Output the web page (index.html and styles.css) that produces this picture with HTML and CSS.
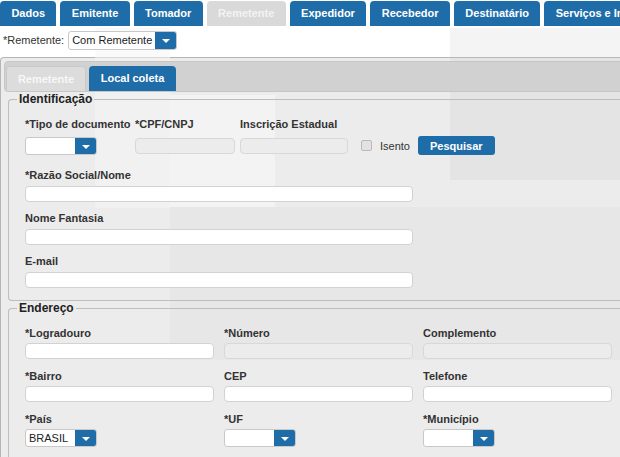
FILE: index.html
```html
<!DOCTYPE html>
<html lang="pt-BR">
<head>
    <meta charset="UTF-8">
    <meta name="viewport" content="width=device-width, initial-scale=1.0">
    <title>Remetente - Local coleta</title>
    <link rel="stylesheet" href="styles.css">
</head>
<body>

<div class="page">

    <!-- light glare bands, painted between the backgrounds and the form -->
    <div class="shade shade-a"></div>
    <div class="shade shade-b"></div>
    <div class="shade shade-c"></div>
    <div class="shade shade-d"></div>

    <ul class="main-tabs layer">
        <li class="tab">Dados</li>
        <li class="tab">Emitente</li>
        <li class="tab">Tomador</li>
        <li class="tab current">Remetente</li>
        <li class="tab">Expedidor</li>
        <li class="tab">Recebedor</li>
        <li class="tab">Destinatário</li>
        <li class="tab">Serviços e Impostos</li>
    </ul>

    <div class="sender-row layer">
        <span>*Remetente:</span>
        <div class="select select-sender">
            <span class="select-value">Com Remetente</span>
            <span class="select-btn"></span>
        </div>
    </div>

    <div class="panel">
        <div class="subtabs layer">
            <span class="subtab off">Remetente</span>
            <span class="subtab on">Local coleta</span>
        </div>

        <fieldset class="group layer">
            <legend>Identificação</legend>

            <div class="doc-grid">
                <label>*Tipo de documento</label>
                <label>*CPF/CNPJ</label>
                <label>Inscrição Estadual</label>
                <span></span>
                <span></span>

                <div class="select select-small">
                    <span class="select-value"></span>
                    <span class="select-btn"></span>
                </div>
                <input type="text" class="box box-cpf" disabled>
                <input type="text" class="box box-ie" disabled>
                <div class="check-wrap">
                    <span class="check"></span>
                    <span>Isento</span>
                </div>
                <button class="btn">Pesquisar</button>
            </div>

            <div class="field">
                <label>*Razão Social/Nome</label>
                <input type="text" class="box box-wide">
            </div>
            <div class="field">
                <label>Nome Fantasia</label>
                <input type="text" class="box box-wide">
            </div>
            <div class="field last">
                <label>E-mail</label>
                <input type="text" class="box box-wide">
            </div>
        </fieldset>

        <fieldset class="group layer">
            <legend>Endereço</legend>

            <div class="address-grid">
                <div class="field">
                    <label>*Logradouro</label>
                    <input type="text" class="box">
                </div>
                <div class="field">
                    <label>*Número</label>
                    <input type="text" class="box" disabled>
                </div>
                <div class="field">
                    <label>Complemento</label>
                    <input type="text" class="box" disabled>
                </div>

                <div class="field">
                    <label>*Bairro</label>
                    <input type="text" class="box">
                </div>
                <div class="field">
                    <label>CEP</label>
                    <input type="text" class="box">
                </div>
                <div class="field">
                    <label>Telefone</label>
                    <input type="text" class="box">
                </div>

                <div class="field">
                    <label>*País</label>
                    <div class="select select-small">
                        <span class="select-value">BRASIL</span>
                        <span class="select-btn"></span>
                    </div>
                </div>
                <div class="field">
                    <label>*UF</label>
                    <div class="select select-small">
                        <span class="select-value"></span>
                        <span class="select-btn"></span>
                    </div>
                </div>
                <div class="field">
                    <label>*Município</label>
                    <div class="select select-small">
                        <span class="select-value"></span>
                        <span class="select-btn"></span>
                    </div>
                </div>
            </div>
        </fieldset>
    </div>

</div>

</body>
</html>
```

FILE: styles.css
```css
*{
    margin: 0;
    padding: 0;
    box-sizing: border-box;
}

body{
    font-family: "Liberation Sans", Arial, sans-serif;
    font-size: 11px;
    color: #333;
    background-color: #fff;
    overflow: hidden;
}

.page{
    position: relative;
    width: 720px;
}

.layer{
    position: relative;
    z-index: 1;
}

/* top tabs */

.main-tabs{
    display: flex;
    gap: 4px;
    padding-top: 1px;
    list-style: none;
    white-space: nowrap;
}

.main-tabs .tab{
    height: 25px;
    line-height: 25px;
    padding: 0 11.4px;
    background-color: #1f6da8;
    color: #fff;
    font-weight: bold;
    border-radius: 4px 4px 0 0;
}

.main-tabs .current{
    background-color: #d9d9d9;
    color: #f3f3f3;
}

/* remetente select row */

.sender-row{
    display: flex;
    align-items: center;
    gap: 4px;
    height: 22px;
    margin-top: 3px;
    padding-left: 3px;
}

.select{
    display: flex;
    height: 18px;
    border: 1px solid #c8c8c8;
    border-radius: 3px;
    background-color: #fff;
    overflow: hidden;
}

.select-value{
    flex: 1;
    line-height: 16px;
    padding-left: 3px;
    color: #222;
}

.select-btn{
    position: relative;
    width: 21px;
    background-color: #1f6da8;
}

.select-btn::after{
    content: "";
    position: absolute;
    left: 7px;
    top: 7px;
    border-left: 4px solid transparent;
    border-right: 4px solid transparent;
    border-top: 4px solid #fff;
}

.select-sender{
    width: 109px;
    height: 19px;
}

.select-sender .select-value{
    line-height: 17px;
}

.select-small{
    width: 72px;
}

/* panel */

.panel{
    margin-top: 6px;
    padding: 3px;
    border: 1px solid #b5b5b5;
    border-right: none;
    border-radius: 4px 0 0 0;
    background-color: #ececec;
    height: 420px;
}

.subtabs{
    display: flex;
    align-items: flex-end;
    gap: 3px;
    height: 31px;
    padding-left: 1px;
    border: 1px solid #c6c6c6;
    border-radius: 4px;
    background-color: #d1d1d1;
}

.subtab{
    height: 25px;
    line-height: 25px;
    text-align: center;
    white-space: nowrap;
    font-weight: bold;
    border-radius: 4px 4px 0 0;
}

.subtab.off{
    width: 80px;
    background-color: #dcdcdc;
    border: 1px solid #c9c9c9;
    border-bottom: none;
    color: #f7f7f7;
    line-height: 24px;
}

.subtab.on{
    width: 87px;
    background-color: #1f6da8;
    color: #fff;
}

/* fieldsets */

.group{
    margin: 0 0 0 4px;
    padding: 11px 16px 12px;
    border: 1px solid #bdbdbd;
    border-right: none;
    border-radius: 4px 0 0 4px;
}

.group legend{
    margin-left: -8px;
    padding: 0 2px;
    line-height: 14px;
    font-size: 12px;
    font-weight: bold;
    color: #222;
}

label{
    display: block;
    line-height: 14px;
    font-weight: bold;
    color: #333;
}

.box{
    display: block;
    width: 100%;
    height: 16px;
    border: 1px solid #d2d2d2;
    border-radius: 4px;
    background-color: #fff;
    outline: none;
}

.box:disabled{
    background-color: #ececec;
    border-color: #d8d8d8;
}

.doc-grid{
    display: grid;
    grid-template-columns: 110px 105px 108px max-content max-content;
    justify-content: start;
    align-items: center;
    row-gap: 5px;
    margin-bottom: 13px;
}

.box-cpf{
    width: 100px;
}

.box-ie{
    width: 108px;
}

.check-wrap{
    display: flex;
    align-items: center;
    gap: 8px;
    margin-left: 13px;
}

.check{
    width: 11px;
    height: 11px;
    border: 1px solid #b9b9b9;
    border-radius: 2px;
    background-color: #e2e2e2;
}

.btn{
    height: 19px;
    margin-left: 8px;
    padding: 0 12px;
    border: none;
    border-radius: 3px;
    background-color: #1f6da8;
    color: #fff;
    font-family: inherit;
    font-size: 11px;
    font-weight: bold;
}

.field{
    margin-bottom: 9px;
}

.field label{
    margin-bottom: 4px;
}

.field.last{
    margin-bottom: 0;
}

.box-wide{
    width: 388px;
}

.address-grid{
    display: grid;
    grid-template-columns: repeat(3, 189px);
    column-gap: 10px;
}

.address-grid .field{
    margin-bottom: 10px;
}

.address-grid .field label{
    margin-bottom: 3px;
}

/* glare bands */

.shade{
    position: absolute;
    z-index: 0;
    pointer-events: none;
}

.shade-a{
    left: 95px;
    top: 28px;
    width: 75px;
    height: 180px;
    background-color: rgba(245, 245, 245, 0.55);
}

.shade-b{
    left: 170px;
    top: 95px;
    width: 105px;
    height: 112px;
    background-color: rgba(255, 255, 255, 0.4);
}

.shade-c{
    left: 450px;
    top: 28px;
    width: 170px;
    height: 152px;
    background-color: rgba(200, 200, 200, 0.2);
}

.shade-d{
    left: 170px;
    top: 207px;
    width: 450px;
    height: 153px;
    background-color: rgba(205, 205, 205, 0.15);
}
```
